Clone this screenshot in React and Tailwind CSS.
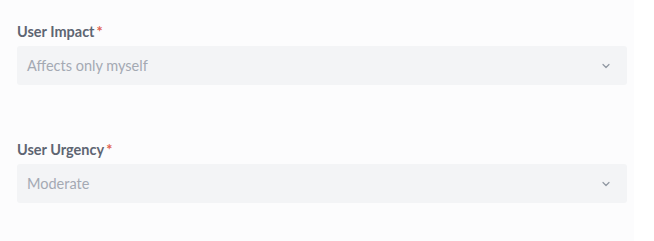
import React from "react";
import { ChevronDown } from "lucide-react";

function SelectField({ label, value }) {
  return (
    <div className="flex flex-col">
      <label className="text-[14.5px] font-bold text-[#5e6572] leading-5 mb-[4px]">
        {label}
        <span className="text-[#e0614f] ml-[2px]">*</span>
      </label>
      <div className="h-[39px] w-[610px] rounded-[3px] bg-[#f3f4f6] flex items-center justify-between pl-[10px] pr-[15px]">
        <span className="text-[14.5px] text-[#a4a9b3]">{value}</span>
        <ChevronDown className="w-[12px] h-[12px] text-[#9097a1]" strokeWidth={2.4} />
      </div>
    </div>
  );
}

export default function App() {
  return (
    <div
      className="w-[654px] h-[241px] bg-white flex"
      style={{ fontFamily: 'Lato, "Open Sans", sans-serif' }}
    >
      <div className="w-[634px] h-full bg-[#fcfcfd] pl-[17px] pt-[22px] flex flex-col gap-[55px]">
        <SelectField label="User Impact" value="Affects only myself" />
        <SelectField label="User Urgency" value="Moderate" />
      </div>
    </div>
  );
}
